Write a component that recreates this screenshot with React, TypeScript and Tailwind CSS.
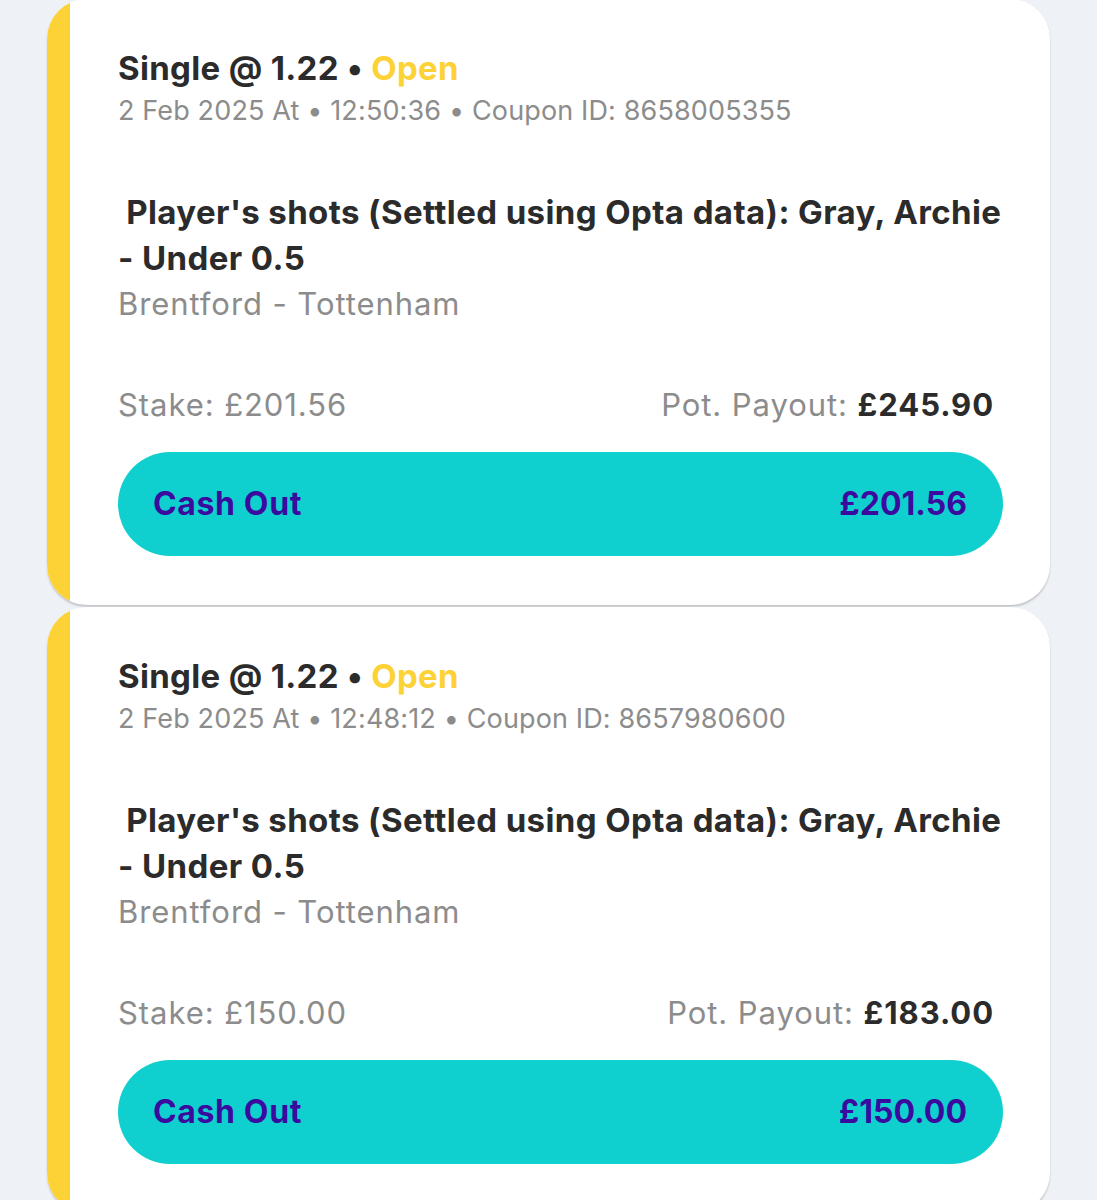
import React from 'react';

type Bet = {
  odds: string;
  date: string;
  time: string;
  couponId: string;
  market: string;
  event: string;
  stake: string;
  payout: string;
  cashOut: string;
};

const bets: Bet[] = [
  {
    odds: '1.22',
    date: '2 Feb 2025',
    time: '12:50:36',
    couponId: '8658005355',
    market: "Player's shots (Settled using Opta data): Gray, Archie - Under 0.5",
    event: 'Brentford - Tottenham',
    stake: '£201.56',
    payout: '£245.90',
    cashOut: '£201.56',
  },
  {
    odds: '1.22',
    date: '2 Feb 2025',
    time: '12:48:12',
    couponId: '8657980600',
    market: "Player's shots (Settled using Opta data): Gray, Archie - Under 0.5",
    event: 'Brentford - Tottenham',
    stake: '£150.00',
    payout: '£183.00',
    cashOut: '£150.00',
  },
];

const BetCard = ({ bet }: { bet: Bet }) => {
  return <div className="flex w-[1003px] bg-white rounded-[40px] overflow-hidden shadow-[0_2px_2px_rgba(0,0,0,0.18)]">
      {/* status stripe */}
      <div className="w-[23px] shrink-0 bg-[#fdd236]" />
      <div className="flex-1 pl-[48px] pr-[47px] pt-[48px] pb-[49px]">
        <div className="text-[33px] leading-[42px] tracking-[0.01em] font-bold text-[#2b2b2b]">
          Single @ {bet.odds} • <span className="text-[#fdd236]">Open</span>
        </div>
        <div className="mt-[1px] text-[27px] leading-[42px] tracking-[0.005em] text-[#8c8c8c]">
          {bet.date} At • {bet.time} • Coupon ID: {bet.couponId}
        </div>
        <div className="mt-[57px] text-[33px] leading-[46px] tracking-[0.012em] font-bold text-[#2b2b2b]">
          &nbsp;{bet.market}
        </div>
        <div className="text-[31px] leading-[46px] tracking-[0.03em] text-[#8c8c8c]">
          {bet.event}
        </div>
        <div className="mt-[57px] flex items-center justify-between pr-[9px] text-[31px] leading-[42px] tracking-[0.03em] text-[#8c8c8c]">
          <span>Stake: {bet.stake}</span>
          <span>
            Pot. Payout: <span className="font-bold text-[#2b2b2b]">{bet.payout}</span>
          </span>
        </div>
        <button className="mt-[26px] w-full h-[104px] rounded-full bg-[#10d0cf] flex items-center justify-between pl-[35px] pr-[36px] text-[32px] font-bold text-[#3b0a9f]">
          <span className="tracking-[0.02em]">Cash Out</span>
          <span>{bet.cashOut}</span>
        </button>
      </div>
    </div>;
};

const App = () => {
  return <div className="min-h-[1200px] bg-[#eef1f5] pl-[47px] flex flex-col gap-[2px] -mt-[1px]" style={{ fontFamily: 'Inter, "Noto Sans", sans-serif' }}>
      {bets.map(bet => <BetCard key={bet.couponId} bet={bet} />)}
    </div>;
};

export default App;
